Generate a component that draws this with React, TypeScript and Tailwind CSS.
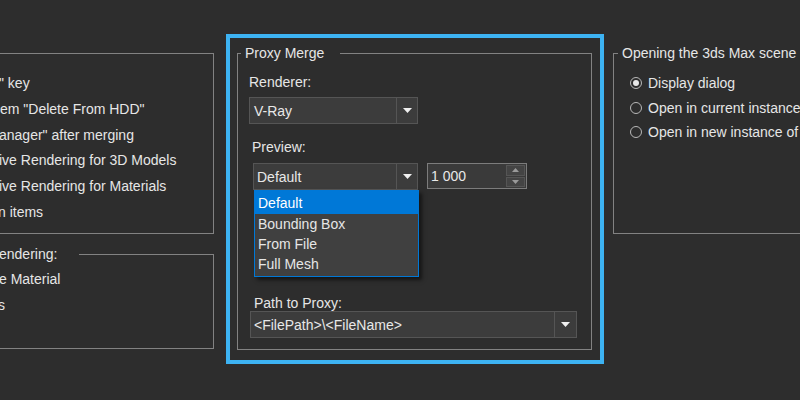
import React from "react";

const Arrow = () => (
  <svg width="9" height="5" viewBox="0 0 9 5" className="block">
    <path d="M0 0 H9 L4.5 5 Z" fill="#f0f0f0" />
  </svg>
);

function Combo({ text, w, btn = 21, textPad = 4 }: { text: string; w: number; btn?: number; textPad?: number }) {
  return (
    <div
      className="flex h-[27px] border border-[#555555] bg-[#3c3c3c]"
      style={{ width: w }}
    >
      <div className="flex flex-1 items-center text-[14px] leading-[16px] text-[#e8e8e8]" style={{ paddingLeft: textPad }}>
        {text}
      </div>
      <div className="flex items-center justify-center border-l border-[#555555]" style={{ width: btn }}>
        <Arrow />
      </div>
    </div>
  );
}

export default function App() {
  const font = { fontFamily: '"Liberation Sans", Arial, sans-serif' };
  return (
    <div className="h-[400px] w-[800px] overflow-hidden bg-[#2d2d2d] text-[14px] text-[#e6e6e6]" style={font}>
      <div className="flex">
        {/* Left column */}
        <div className="flex w-[214px] shrink-0 flex-col">
          <fieldset className="mt-[53px] h-[181px] border border-l-0 border-[#828282] pt-[17px] leading-[25.8px]">
            <div className="-ml-[1px] whitespace-nowrap">" key</div>
            <div className="whitespace-nowrap">em "Delete From HDD"</div>
            <div className="-ml-[1px] whitespace-nowrap">anager" after merging</div>
            <div className="-ml-[1px] whitespace-nowrap">ive Rendering for 3D Models</div>
            <div className="-ml-[1px] whitespace-nowrap">ive Rendering for Materials</div>
            <div className="-ml-[2px] whitespace-nowrap">n items</div>
          </fieldset>
          <fieldset className="mt-[11px] h-[104px] border border-l-0 border-[#828282] pt-[3px] leading-[26px]">
            <legend className="-ml-[1px] pr-[22px] leading-[18px]">endering:</legend>
            <div className="-ml-[1px] whitespace-nowrap">e Material</div>
            <div className="-ml-[2px] whitespace-nowrap">s</div>
          </fieldset>
        </div>

        {/* Highlighted Proxy Merge box */}
        <div className="ml-[12px] mt-[34px] h-[330px] w-[378px] shrink-0 border-[4px] border-[#3db3f3] pb-[10px] pl-[7px] pr-[8px] pt-[6px]">
          <fieldset className="h-[306px] border border-[#828282] pl-[11px]">
            <legend className="-ml-[8px] px-[4px] pr-[16px] leading-[18px]">Proxy Merge</legend>
            <div className="mt-[12px] leading-[16px]">Renderer:</div>
            <div className="mt-[7px]">
              <Combo text="V-Ray" w={169} btn={21} />
            </div>
            <div className="ml-[3px] mt-[15px] leading-[16px]">Preview:</div>
            <div className="relative ml-[4px] mt-[8px] flex items-start gap-[9px]">
              <Combo text="Default" w={165} btn={21} textPad={3} />
              <div className="flex h-[26px] w-[100px] border border-[#7c7c7c] bg-[#3a3a3a]">
                <div className="flex flex-1 items-center pl-[3px] leading-[16px] text-[#e8e8e8]">1 000</div>
                <div className="flex w-[20px] flex-col gap-[1px] py-[1px] pr-[1px]">
                  <div className="flex flex-1 items-center justify-center border border-[#555555] bg-[#444444]">
                    <svg width="7" height="4" viewBox="0 0 7 4"><path d="M0 4 H7 L3.5 0 Z" fill="#9a9a9a" /></svg>
                  </div>
                  <div className="flex flex-1 items-center justify-center border border-[#555555] bg-[#444444]">
                    <svg width="7" height="4" viewBox="0 0 7 4"><path d="M0 0 H7 L3.5 4 Z" fill="#9a9a9a" /></svg>
                  </div>
                </div>
              </div>
              {/* open dropdown list */}
              <div className="absolute left-[1px] top-[27px] w-[165px] border border-[#0078d7] bg-[#404040] pb-[2px] shadow-[3px_3px_4px_rgba(0,0,0,0.55)]">
                <div className="flex h-[23px] items-center bg-[#0078d7] pl-[3px] leading-[16px] text-white">Default</div>
                <div className="flex h-[20px] items-center pl-[3px] leading-[16px]">Bounding Box</div>
                <div className="flex h-[20px] items-center pl-[3px] leading-[16px]">From File</div>
                <div className="flex h-[20px] items-center pl-[3px] leading-[16px]">Full Mesh</div>
              </div>
            </div>
            <div className="ml-[5px] mt-[105px] leading-[16px]">Path to Proxy:</div>
            <div className="ml-[1px]">
              <Combo text="<FilePath>\<FileName>" w={327} btn={22} textPad={3} />
            </div>
          </fieldset>
        </div>

        {/* Right column */}
        <div className="ml-[9px] flex-1 overflow-hidden">
          <fieldset className="mt-[44px] h-[190px] w-[260px] border border-r-0 border-[#828282] pl-[16px] pt-[9px] leading-[24.6px]">
            <legend className="-ml-[12px] whitespace-nowrap px-[4px] leading-[18px]">Opening the 3ds Max scene</legend>
            {["Display dialog", "Open in current instance of 3ds Max", "Open in new instance of 3ds Max"].map((t, i) => (
              <div key={t} className="flex items-center gap-[6px] whitespace-nowrap">
                <div className="flex h-[12px] w-[12px] shrink-0 items-center justify-center rounded-full border border-[#b8b8b8] bg-[#2d2d2d]">
                  {i === 0 && <div className="h-[6px] w-[6px] rounded-full bg-[#e8e8e8]" />}
                </div>
                <span>{t}</span>
              </div>
            ))}
          </fieldset>
        </div>
      </div>
    </div>
  );
}
